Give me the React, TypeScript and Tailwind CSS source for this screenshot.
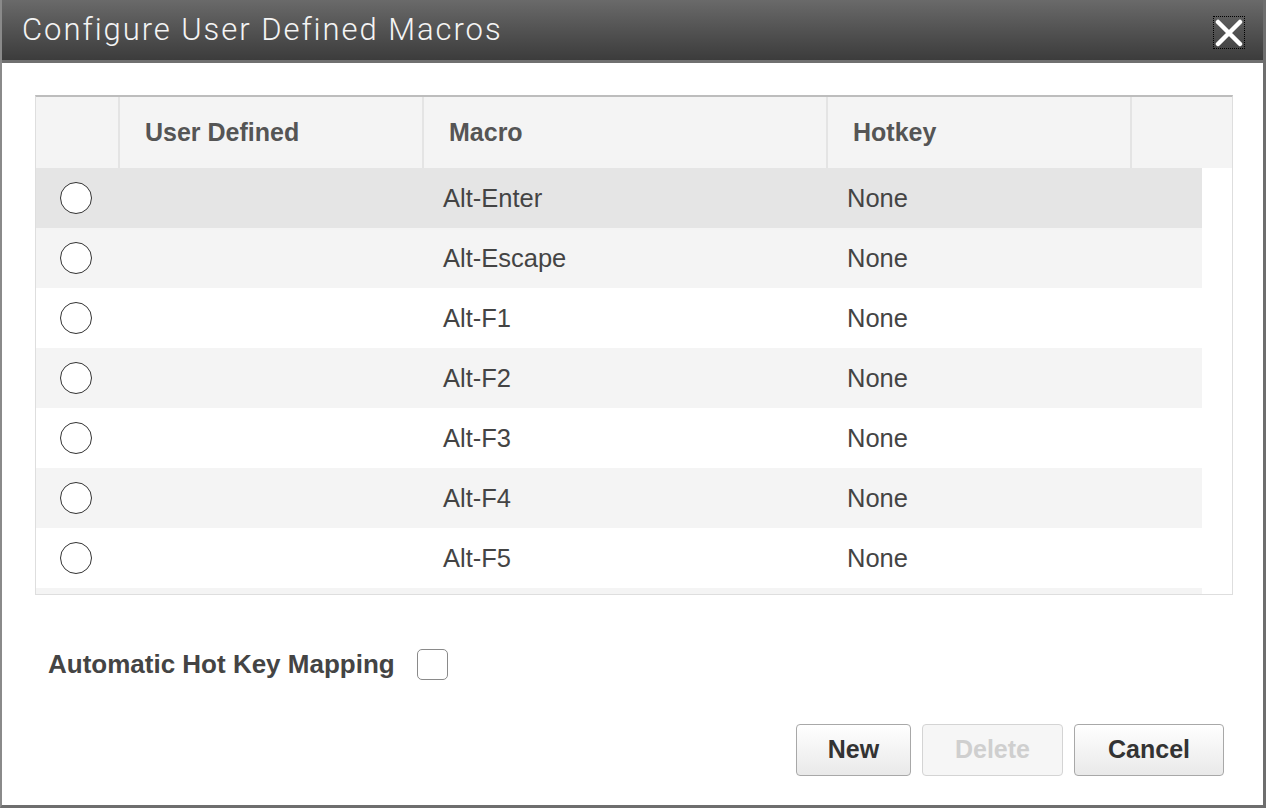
import React from "react";

const rows = [
  { macro: "Alt-Enter", hotkey: "None" },
  { macro: "Alt-Escape", hotkey: "None" },
  { macro: "Alt-F1", hotkey: "None" },
  { macro: "Alt-F2", hotkey: "None" },
  { macro: "Alt-F3", hotkey: "None" },
  { macro: "Alt-F4", hotkey: "None" },
  { macro: "Alt-F5", hotkey: "None" },
];

function rowBg(i: number) {
  if (i === 0) return "bg-[#e5e5e5]";
  return i % 2 === 1 ? "bg-[#f4f4f4]" : "bg-white";
}

function Radio() {
  return (
    <span className="block h-[32px] w-[32px] rounded-full border-[1.5px] border-[#333] bg-white" />
  );
}

function Button({
  label,
  width,
  disabled,
}: {
  label: string;
  width: string;
  disabled?: boolean;
}) {
  return (
    <button
      className={
        "flex h-[52px] items-center justify-center rounded-[4px] border text-[25px] font-bold " +
        width +
        (disabled
          ? " border-[#d4d4d4] bg-[#f6f6f6] text-[#cfcfcf]"
          : " border-[#a8a8a8] bg-gradient-to-b from-white to-[#e9e9e9] text-[#333]")
      }
    >
      {label}
    </button>
  );
}

export default function App() {
  return (
    <div className="h-[808px] w-[1268px] bg-white font-['Liberation_Sans',Arial,sans-serif]">
      <div className="flex h-[808px] w-[1266px] flex-col border-b-[3px] border-l-2 border-r-[3px] border-[#6e6e6e] border-l-[#8a8a8a]">
        {/* title bar */}
        <div className="flex h-[63px] shrink-0 items-start justify-between border-b-[3px] border-[#707070] bg-gradient-to-b from-[#6a6a6a] to-[#3c3c3c]">
          <h1 className="mt-[7px] ml-[20px] font-['Roboto',sans-serif] text-[31px] font-light tracking-[1.95px] text-[#f4f4f4]">
            Configure User Defined Macros
          </h1>
          <button className="mt-[16px] mr-[18px] flex h-[33px] w-[32px] items-center justify-center border border-dotted border-black">
            <svg width="28" height="28" viewBox="0 0 28 28">
              <path
                d="M3 3 L25 25 M25 3 L3 25"
                stroke="white"
                strokeWidth="4.5"
                strokeLinecap="round"
              />
            </svg>
          </button>
        </div>

        {/* body */}
        <div className="flex flex-1 flex-col pl-[33px] pr-[39px] pt-[32px]">
          <div className="w-[1198px] border-x border-b border-[#dedede] border-t-2 border-t-[#bdbdbd]">
            <div className="grid h-[71px] grid-cols-[84px_304px_404px_304px_1fr] bg-[#f4f4f4] text-[25px] font-bold text-[#555]">
              <div className="border-r-2 border-[#e4e4e4]" />
              <div className="flex items-center border-r-2 border-[#e4e4e4] pl-[25px]">User Defined</div>
              <div className="flex items-center border-r-2 border-[#e4e4e4] pl-[25px]">Macro</div>
              <div className="flex items-center border-r-2 border-[#e4e4e4] pl-[25px]">Hotkey</div>
              <div />
            </div>
            <div className="h-[426px] overflow-hidden">
              {rows.map((r, i) => (
                <div
                  key={r.macro}
                  className={
                    "grid h-[60px] w-[1166px] grid-cols-[84px_304px_404px_374px] items-center text-[25.5px] text-[#444] " +
                    rowBg(i)
                  }
                >
                  <div className="flex pl-[24px]">
                    <Radio />
                  </div>
                  <div />
                  <div className="pl-[19px]">{r.macro}</div>
                  <div className="pl-[19px]">{r.hotkey}</div>
                </div>
              ))}
              {/* next row, scrolled out of view */}
              <div className="h-[60px] w-[1166px] bg-[#f4f4f4]" />
            </div>
          </div>

          <div className="mt-[50px] flex items-center pl-[13px]">
            <span className="text-[26px] font-bold text-[#444]">Automatic Hot Key Mapping</span>
            <span className="ml-[22px] block h-[31px] w-[31px] rounded-[5px] border-[1.5px] border-[#8a8a8a] bg-white" />
          </div>

          <div className="mt-[40px] flex justify-end gap-[11px]">
            <Button label="New" width="w-[115px]" />
            <Button label="Delete" width="w-[141px]" disabled />
            <Button label="Cancel" width="w-[150px]" />
          </div>
        </div>
      </div>
    </div>
  );
}
